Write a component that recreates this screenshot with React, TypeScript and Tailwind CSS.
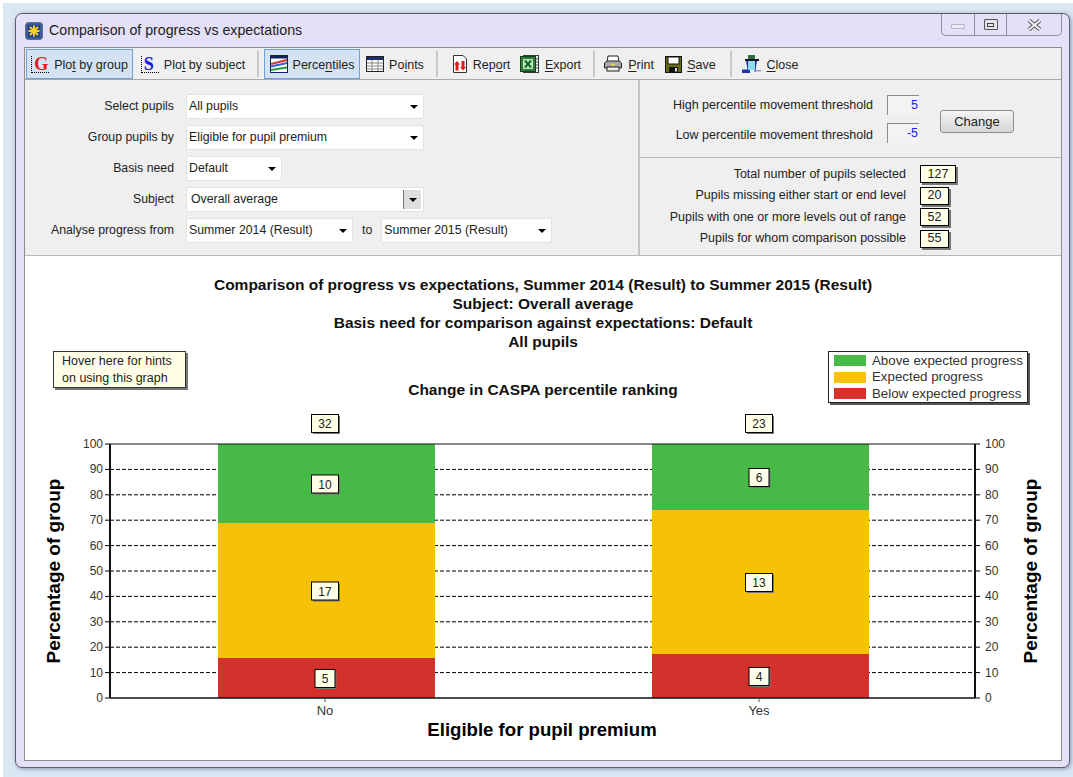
import React from 'react';

const BARS = [
  { x: 218, label: 'No', total: 32, segs: [{ y: 444, h: 79, fill: '#46b947', n: 10 }, { y: 523, h: 135, fill: '#f7c108', n: 17 }, { y: 658, h: 40, fill: '#d4302c', n: 5 }] },
  { x: 652, label: 'Yes', total: 23, segs: [{ y: 444, h: 66, fill: '#46b947', n: 6 }, { y: 510, h: 144, fill: '#f7c108', n: 13 }, { y: 654, h: 44, fill: '#d4302c', n: 4 }] },
];
const TICKS = [0, 10, 20, 30, 40, 50, 60, 70, 80, 90, 100];
const ORIGIN_Y = 410; // page y of the chart drawing's top edge

const Label: React.FC<{ before: string; mark: string; after: string }> = ({ before, mark, after }) => (
  <span className="mt-[2px]">{before}<u className="underline-offset-2">{mark}</u>{after}</span>
);

const ToolButton: React.FC<{ icon: React.ReactNode; active?: boolean; width: string; children: React.ReactNode }> = ({ icon, active, width, children }) => (
  <div className={`flex h-[30px] items-center justify-center gap-[5px] pt-[1px] ${width} ${active ? 'border border-[#6f9fd8] bg-[#d3e3f3]' : 'border border-transparent'}`}>
    {icon}
    {children}
  </div>
);

const Sep = () => <div className="mr-[5px] ml-[6px] h-[26px] w-[2px] bg-[#c9c9c9]" />;

const LetterIcon: React.FC<{ letter: string; color: string }> = ({ letter, color }) => (
  <span className={`flex h-[17px] w-[18px] items-end border-b border-l border-dotted border-black pl-[2px] font-['Liberation_Serif',serif] text-[18px] leading-[16px] font-bold ${color}`}>
    {letter}
  </span>
);

const PercentilesIcon = () => (
  <svg width="18" height="18" viewBox="0 0 18 18">
    <rect x="0.5" y="0.5" width="17" height="17" fill="#fff" stroke="#14205c" />
    <rect x="1" y="1" width="16" height="2.5" fill="#14205c" />
    <path d="M1 9 L17 5" stroke="#d8322a" strokeWidth="2" />
    <path d="M1 11.5 L17 8" stroke="#3a5fd0" strokeWidth="2" />
    <path d="M1 15 L17 12.5" stroke="#2a9a3c" strokeWidth="2" />
  </svg>
);

const PointsIcon = () => (
  <svg width="18" height="16" viewBox="0 0 18 16">
    <rect x="0.5" y="0.5" width="17" height="15" fill="#fff" stroke="#222" />
    <rect x="1" y="1" width="16" height="3" fill="#1d2a6b" />
    <path d="M1 7 H17 M1 10 H17 M1 13 H17 M6 4 V15 M12 4 V15" stroke="#8a8a8a" />
  </svg>
);

const ReportIcon = () => (
  <svg width="16" height="18" viewBox="0 0 16 18">
    <path d="M1.5 0.5 H11 L14.5 4 V17.5 H1.5 Z" fill="#fff" stroke="#333" />
    <path d="M5 6 L8 9.5 H6.5 V15.5 H3.5 V9.5 H2 Z" fill="#e01818" />
    <path d="M11 15.5 L14 12 H12.5 V6 H9.5 V12 H8 Z" fill="#e01818" />
  </svg>
);

const ExportIcon = () => (
  <svg width="20" height="20" viewBox="0 0 20 20">
    <rect x="3.5" y="1.5" width="15" height="17" fill="#e8efe8" stroke="#2c3a2c" />
    <rect x="0.5" y="2.5" width="15" height="15" fill="#2f7d3a" stroke="#1c3a20" />
    <rect x="3" y="5" width="10" height="10" fill="#bfe3c0" />
    <path d="M5 6.5 L11 13.5 M11 6.5 L5 13.5" stroke="#0f6a20" strokeWidth="2" />
    <path d="M16 5 H18 M16 8 H18 M16 11 H18 M16 14 H18" stroke="#555" />
  </svg>
);

const PrintIcon = () => (
  <svg width="20" height="18" viewBox="0 0 20 18">
    <path d="M5 1 H15 L16 7 H4 Z" fill="#fff" stroke="#222" />
    <path d="M1.5 8 L4 6 H16 L18.5 8 V13 H1.5 Z" fill="#a8a8a8" stroke="#222" />
    <rect x="4" y="12" width="12" height="4" fill="#eee" stroke="#222" />
    <rect x="8" y="9" width="4" height="1.5" fill="#e8d84a" />
  </svg>
);

const SaveIcon = () => (
  <svg width="17" height="17" viewBox="0 0 17 17">
    <rect x="0.5" y="0.5" width="16" height="16" fill="#6b6a10" stroke="#111" />
    <rect x="3" y="1" width="11" height="7" fill="#fff" stroke="#111" />
    <rect x="4" y="11" width="9" height="5.5" fill="#111" />
    <rect x="10" y="12" width="2" height="3.5" fill="#ddd" />
  </svg>
);

const CloseIcon = () => (
  <svg width="20" height="18" viewBox="0 0 20 18">
    <rect x="6" y="0" width="7" height="4" fill="#2f6b45" />
    <rect x="3" y="4" width="14" height="2" fill="#111" />
    <path d="M4 6 H6 V15 H0 V17 H6 M15 6 H13 V17 H13" fill="#1f2fb0" stroke="#1f2fb0" />
    <rect x="6" y="6" width="7" height="9" fill="#8fdcf0" />
    <rect x="0" y="15" width="8" height="3" fill="#1f2fb0" />
    <rect x="13" y="15" width="6" height="1.5" fill="#9a9ad8" />
  </svg>
);

const Combo: React.FC<{ value: string; width: string }> = ({ value, width }) => (
  <div className={`flex h-[25px] items-center justify-between rounded-[2px] border border-[#e2e2e2] bg-white pr-[4px] pl-[2px] ${width}`}>
    <span>{value}</span>
    <span className="mr-[1px] h-0 w-0 border-x-[4px] border-t-[4px] border-x-transparent border-t-black" />
  </div>
);

const FormRow: React.FC<{ label: string; children: React.ReactNode }> = ({ label, children }) => (
  <div className="flex h-[25px] items-center">
    <span className="w-[149px] text-right">{label}</span>
    <div className="ml-[12px] flex items-center">{children}</div>
  </div>
);

const Stat: React.FC<{ label: string; value: number; width: string; h: string }> = ({ label, value, width, h }) => (
  <div className={`flex items-center ${h}`}>
    <span className="w-[266px] text-right">{label}</span>
    <span className={`ml-[14px] flex h-[18px] items-center justify-center border border-black bg-[#ffffe8] shadow-[2px_2px_0_#777] ${width}`}>{value}</span>
  </div>
);

const Threshold: React.FC<{ label: string; value: number; inputClass: string }> = ({ label, value, inputClass }) => (
  <div className="flex h-[20px] items-center">
    <span className="w-[233px] text-right">{label}</span>
    <span className={`ml-[14px] flex h-[20px] w-[32px] items-center justify-end border-t border-l border-[#8c8c8c] bg-[#f3f3f3] pr-[1px] text-[#2020ff] ${inputClass}`}>{value}</span>
  </div>
);

const CountBox: React.FC<{ cx: number; cy: number; n: number }> = ({ cx, cy, n }) => {
  const top = cy - ORIGIN_Y;
  const w = n < 10 ? 20 : 27;
  return (
    <g>
      <rect x={cx - w / 2 + 1.5} y={top - 8} width={w} height="18" fill="#777" />
      <rect x={cx - w / 2} y={top - 9.5} width={w} height="18" fill="#ffffe8" stroke="#000" />
      <text x={cx} y={top + 4} textAnchor="middle" fontSize="12" fill="#222">{n}</text>
    </g>
  );
};

const ProgressChart = () => (
  <svg width="1036" height="350" viewBox="25 0 1036 350" className="block font-['Liberation_Sans',sans-serif]">
    {TICKS.map((t) => {
      const y = 288 - t * 2.54;
      return (
        <g key={t}>
          {t > 0 && t < 100 && <line x1="110" x2="975" y1={y} y2={y} stroke="#000" strokeDasharray="4 2" />}
          <line x1="105" x2="110" y1={y} y2={y} stroke="#000" />
          <line x1="975" x2="980" y1={y} y2={y} stroke="#000" />
          <text x="103" y={y + 4} textAnchor="end" fontSize="12" fill="#333">{t}</text>
          <text x="985" y={y + 4} fontSize="12" fill="#333">{t}</text>
        </g>
      );
    })}
    {BARS.map((bar) => (
      <g key={bar.label}>
        {bar.segs.map((s) => (
          <rect key={s.n} x={bar.x} y={s.y - ORIGIN_Y} width="217" height={s.h} fill={s.fill} />
        ))}
      </g>
    ))}
    <line x1="110" x2="975" y1="34" y2="34" stroke="#111" />
    <line x1="110" x2="975" y1="288" y2="288" stroke="#111" strokeWidth="1.5" />
    <line x1="110" x2="110" y1="34" y2="288" stroke="#111" strokeWidth="2" />
    <line x1="975" x2="975" y1="34" y2="288" stroke="#111" strokeWidth="2" />
    {BARS.map((bar) => {
      const cx = bar.x + 107;
      return (
        <g key={bar.label}>
          <line x1={cx} x2={cx} y1="288" y2="292" stroke="#555" />
          <text x={cx} y="305" textAnchor="middle" fontSize="13" fill="#333">{bar.label}</text>
          <CountBox cx={cx} cy={424} n={bar.total} />
          {bar.segs.map((s) => (
            <CountBox key={s.n} cx={cx} cy={s.y + s.h / 2 + 1} n={s.n} />
          ))}
        </g>
      );
    })}
    <text x="542" y="326" textAnchor="middle" fontSize="18.6" fontWeight="700" fill="#000">Eligible for pupil premium</text>
    <text transform="translate(60 161) rotate(-90)" textAnchor="middle" fontSize="19" fontWeight="700" fill="#000">Percentage of group</text>
    <text transform="translate(1037 161) rotate(-90)" textAnchor="middle" fontSize="19" fontWeight="700" fill="#000">Percentage of group</text>
  </svg>
);

const LegendRow: React.FC<{ color: string; label: string }> = ({ color, label }) => (
  <div className="flex h-[16.5px] items-center gap-[6px]">
    <span className={`h-[11px] w-[32px] ${color}`} />
    <span>{label}</span>
  </div>
);

const App = () => {
  return (
    <div className="h-[777px] w-[1073px] overflow-hidden border-t-[3px] border-l-[3px] border-white bg-[#dbe7f5] pt-[10px] pl-[12px] font-['Liberation_Sans',sans-serif] text-[12.5px] text-[#222]">
      <div className="flex h-[755px] w-[1055px] flex-col rounded-[7px] border border-[#5f6066] bg-[#e4e0f8] pr-[7px] pb-[7px] pl-[8px] shadow-[1px_1px_4px_rgba(60,70,100,0.5)]">
        <div className="flex h-[33px] shrink-0 items-start justify-between">
          <div className="flex items-center gap-[6px] pt-[6px] pl-[1px]">
            <svg width="18" height="18" viewBox="0 0 18 18">
              <rect x="0.5" y="0.5" width="17" height="17" rx="3" fill="#3a5a98" stroke="#5f6f90" />
              <rect x="3" y="3" width="12" height="12" fill="#23407e" />
              <path d="M9 3.5 V14.5 M3.5 9 H14.5 M5 5 L13 13 M13 5 L5 13" stroke="#f4d020" strokeWidth="2" />
            </svg>
            <span className="text-[14.2px] text-[#1c1c1c]">Comparison of progress vs expectations</span>
          </div>
          <div className="flex h-[22px] w-[121px] rounded-b-[5px] border-x border-b border-[#8e8ea4]">
            <div className="flex w-[33px] items-center justify-center border-r border-[#8e8ea4]">
              <span className="mt-[3px] h-[5px] w-[14px] rounded-[1px] border border-[#b4b4c4] bg-[#eceaf4]" />
            </div>
            <div className="flex w-[32px] items-center justify-center border-r border-[#8e8ea4]">
              <span className="flex h-[11px] w-[14px] items-center justify-center rounded-[1px] border border-[#555] bg-[#e4e4ec]">
                <span className="h-[4px] w-[7px] border border-[#444]" />
              </span>
            </div>
            <div className="flex flex-1 items-center justify-center">
              <svg width="15" height="12" viewBox="0 0 15 12">
                <path d="M2 1.5 L13 10.5 M13 1.5 L2 10.5" stroke="#55555c" strokeWidth="4" />
                <path d="M2 1.5 L13 10.5 M13 1.5 L2 10.5" stroke="#f4f4fa" strokeWidth="2" />
              </svg>
            </div>
          </div>
        </div>

        <div className="flex flex-1 flex-col border border-[#8d8d8d] bg-[#efefef]">
          <div className="flex h-[32px] shrink-0 items-center border-b border-[#a8a8a8] pl-[1px]">
            <ToolButton active width="w-[107px]" icon={<LetterIcon letter="G" color="text-[#e01818]" />}>
              <Label before="Plo" mark="t" after=" by group" />
            </ToolButton>
            <div className="w-[2px]" />
            <ToolButton width="w-[116px]" icon={<LetterIcon letter="S" color="text-[#1818e0]" />}>
              <Label before="Plo" mark="t" after=" by subject" />
            </ToolButton>
            <Sep />
            <ToolButton active width="w-[96px]" icon={<PercentilesIcon />}>
              <Label before="Perce" mark="n" after="tiles" />
            </ToolButton>
            <ToolButton width="w-[70px]" icon={<PointsIcon />}>
              <Label before="Po" mark="i" after="nts" />
            </ToolButton>
            <Sep />
            <div className="w-[2px]" />
            <ToolButton width="w-[72px]" icon={<ReportIcon />}>
              <Label before="Rep" mark="o" after="rt" />
            </ToolButton>
            <ToolButton width="w-[67px]" icon={<ExportIcon />}>
              <Label before="" mark="E" after="xport" />
            </ToolButton>
            <div className="w-[3px]" />
            <Sep />
            <ToolButton width="w-[57px]" icon={<PrintIcon />}>
              <Label before="" mark="P" after="rint" />
            </ToolButton>
            <ToolButton width="w-[67px]" icon={<SaveIcon />}>
              <Label before="" mark="S" after="ave" />
            </ToolButton>
            <Sep />
            <ToolButton width="w-[66px]" icon={<CloseIcon />}>
              <Label before="" mark="C" after="lose" />
            </ToolButton>
          </div>

          <div className="flex h-[176px] shrink-0 border-b border-[#b8b8b8]">
            <div className="flex w-[613px] flex-col gap-[6px] pt-[14px] text-[12.3px]">
              <FormRow label="Select pupils"><Combo value="All pupils" width="w-[238px]" /></FormRow>
              <FormRow label="Group pupils by"><Combo value="Eligible for pupil premium" width="w-[238px]" /></FormRow>
              <FormRow label="Basis need"><Combo value="Default" width="w-[96px]" /></FormRow>
              <FormRow label="Subject">
                <div className="flex h-[25px] w-[238px] items-center justify-between rounded-[2px] border border-[#e2e2e2] bg-white pr-[2px] pl-[4px]">
                  <span>Overall average</span>
                  <span className="flex h-[19px] w-[18px] items-center justify-center border-l border-[#777] bg-[#dedede]">
                    <span className="h-0 w-0 border-x-[4px] border-t-[4px] border-x-transparent border-t-black" />
                  </span>
                </div>
              </FormRow>
              <FormRow label="Analyse progress from">
                <Combo value="Summer 2014 (Result)" width="w-[167px]" />
                <span className="mx-[9px]">to</span>
                <Combo value="Summer 2015 (Result)" width="w-[171px]" />
              </FormRow>
            </div>
            <div className="flex flex-1 flex-col border-l-2 border-[#c4c4c4]">
              <div className="flex h-[78px] shrink-0 items-center border-b border-[#b8b8b8] pt-[3px]">
                <div className="flex flex-col gap-[10px]">
                  <Threshold label="High percentile movement threshold" value={5} inputClass="" />
                  <Threshold label="Low percentile movement threshold" value={-5} inputClass="-translate-y-[2px]" />
                </div>
                <button className="mt-[3px] ml-[21px] h-[23px] w-[74px] rounded-[3px] border border-[#8e8e8e] bg-gradient-to-b from-[#f4f4f4] to-[#d6d6d6] text-[13px]">Change</button>
              </div>
              <div className="flex flex-col pt-[5px]">
                <Stat label="Total number of pupils selected" value={127} width="w-[36px]" h="h-[22px]" />
                <Stat label="Pupils missing either start or end level" value={20} width="w-[29px]" h="h-[21px]" />
                <Stat label="Pupils with one or more levels out of range" value={52} width="w-[29px]" h="h-[22px]" />
                <Stat label="Pupils for whom comparison possible" value={55} width="w-[29px]" h="h-[21px]" />
              </div>
            </div>
          </div>

          <div className="relative flex-1 bg-white">
            <div className="pt-[19px] text-center text-[15.5px] leading-[19px] font-bold text-[#111]">
              <div>Comparison of progress vs expectations, Summer 2014 (Result) to Summer 2015 (Result)</div>
              <div>Subject: Overall average</div>
              <div>Basis need for comparison against expectations: Default</div>
              <div>All pupils</div>
              <div className="mt-[29px]">Change in CASPA percentile ranking</div>
            </div>
            <div className="absolute top-[95px] left-[28px] flex h-[37px] w-[133px] flex-col justify-center border border-[#333] bg-[#ffffe8] pl-[8px] leading-[17px] shadow-[2px_2px_0_#777]">
              <span>Hover here for hints</span>
              <span>on using this graph</span>
            </div>
            <div className="absolute top-[95px] left-[803px] flex h-[52px] w-[200px] flex-col justify-center border border-[#222] bg-white pl-[5px] text-[13.3px] text-[#333] shadow-[2px_2px_0_#555]">
              <LegendRow color="bg-[#46b947]" label="Above expected progress" />
              <LegendRow color="bg-[#f9c108]" label="Expected progress" />
              <LegendRow color="bg-[#d8302c]" label="Below expected progress" />
            </div>
            <div className="mt-[11px]">
              <ProgressChart />
            </div>
          </div>
        </div>
      </div>
    </div>
  );
};

export default App;
